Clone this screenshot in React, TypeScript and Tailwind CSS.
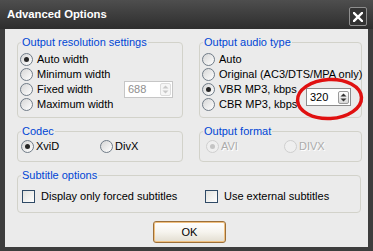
import { ReactNode } from 'react';

function Radio({ label, checked, disabled, gap = 'gap-[4px]' }: { label: string; checked?: boolean; disabled?: boolean; gap?: string }) {
  return (
    <div className={`flex h-[15px] items-center whitespace-nowrap ${gap}`}>
      <span
        className={`flex h-[13px] w-[13px] shrink-0 items-center justify-center rounded-full border ${
          disabled ? 'border-[#cfcfcf] bg-[#efefef]' : 'border-[#707c88] bg-gradient-to-br from-[#d6d6d6] to-white'
        }`}
      >
        {checked && <span className={`h-[5px] w-[5px] rounded-full ${disabled ? 'bg-[#c4c4c4]' : 'bg-[#262626]'}`} />}
      </span>
      <span className={disabled ? 'text-[#ababab] [text-shadow:1px_1px_0_#fff]' : 'text-black'}>{label}</span>
    </div>
  );
}

function Check({ label }: { label: string }) {
  return (
    <div className="flex h-[16px] items-center gap-[6px] whitespace-nowrap">
      <span className="h-[13px] w-[13px] shrink-0 border border-[#2f4a66] bg-gradient-to-br from-[#e2e2de] to-white" />
      <span>{label}</span>
    </div>
  );
}

function Spin({ value, disabled, width }: { value: string; disabled?: boolean; width: string }) {
  const arrow = disabled ? '#c8c8c8' : '#333333';
  return (
    <div
      className={`flex items-center justify-between border bg-white pl-[3px] pr-[1px] ${width} ${
        disabled ? 'h-[17px] border-[#c6c6c6] text-[#8e8e8e]' : 'h-[18px] border-[#8c8c8c] text-black'
      }`}
    >
      <span>{value}</span>
      <span
        className={`flex h-[13px] w-[11px] flex-col items-center justify-center gap-[1px] rounded-[2px] border ${
          disabled ? 'border-[#dcdcdc] bg-[#f6f6f6]' : 'border-[#9a9a9a] bg-gradient-to-b from-white to-[#d8d8d8]'
        }`}
      >
        <svg width="7" height="4" viewBox="0 0 7 4">
          <path d="M0.5 3.5 L3.5 0.5 L6.5 3.5 Z" fill={arrow} />
        </svg>
        <svg width="7" height="4" viewBox="0 0 7 4">
          <path d="M0.5 0.5 L3.5 3.5 L6.5 0.5 Z" fill={arrow} />
        </svg>
      </span>
    </div>
  );
}

function Group({ title, className = '', children }: { title: string; className?: string; children: ReactNode }) {
  return (
    <fieldset className={`min-w-0 rounded-[4px] border border-[#d2d2ca] pl-[1px] ${className}`}>
      <legend className="ml-[2px] px-[1px] leading-[13px] text-[#0046d5]">{title}</legend>
      {children}
    </fieldset>
  );
}

export default function App() {
  return (
    <div className="relative flex h-[251px] w-[373px] flex-col overflow-hidden bg-[#3d3d3d] font-['Liberation_Sans',Arial,sans-serif] text-[11px] text-black">
      <div className="flex h-[29px] shrink-0 items-center justify-between bg-gradient-to-b from-[#4e4e4e] to-[#2e2e2e] pl-[7px] pr-[6px]">
        <span className="text-[11.3px] font-bold text-white">Advanced Options</span>
        <div className="mt-[4px] flex h-[19px] w-[18px] items-center justify-center rounded-[2px] border border-[#8f8f8f] bg-[#333333]">
          <svg width="10" height="10" viewBox="0 0 10 10">
            <path d="M1 1 L9 9 M9 1 L1 9" stroke="#ffffff" strokeWidth="2.4" strokeLinecap="square" />
          </svg>
        </div>
      </div>

      <div className="mx-[5px] mb-[4px] flex flex-1 flex-col bg-[#ebebeb] pb-[4px] pl-[12px] pr-[6px] pt-[7px]">
        <div className="grid grid-cols-[166px_163px] gap-x-[16px]">
          <Group title="Output resolution settings">
            <div className="flex flex-col pb-[5px] pl-[1px] pr-[9px] pt-[3px]">
              <Radio label="Auto width" checked />
              <Radio label="Minimum width" />
              <div className="flex h-[15px] items-center justify-between">
                <Radio label="Fixed width" />
                <Spin value="688" disabled width="w-[49px]" />
              </div>
              <Radio label="Maximum width" />
            </div>
          </Group>

          <Group title="Output audio type">
            <div className="flex flex-col pb-[5px] pl-[1px] pr-[10px] pt-[3px]">
              <Radio label="Auto" />
              <Radio label="Original (AC3/DTS/MPA only)" />
              <div className="flex items-center justify-between">
                <div className="flex flex-col">
                  <Radio label="VBR MP3, kbps" checked />
                  <Radio label="CBR MP3, kbps" />
                </div>
                <Spin value="320" width="w-[45px]" />
              </div>
            </div>
          </Group>

          <Group title="Codec" className="mt-[7px]">
            <div className="flex h-[16px] items-center pl-[2px]">
              <div className="w-[79px]">
                <Radio label="XviD" checked gap="gap-[2px]" />
              </div>
              <Radio label="DivX" gap="gap-[2px]" />
            </div>
            <div className="h-[7px]" />
          </Group>

          <Group title="Output format" className="mt-[7px]">
            <div className="flex h-[16px] items-center pl-[5px]">
              <div className="w-[78px]">
                <Radio label="AVI" checked disabled gap="gap-[2px]" />
              </div>
              <Radio label="DIVX" disabled gap="gap-[2px]" />
            </div>
            <div className="h-[7px]" />
          </Group>
        </div>

        <Group title="Subtitle options" className="mt-[7px] mr-[1px]">
          <div className="flex items-center pb-[8px] pl-[3px] pt-[6px]">
            <div className="w-[183px]">
              <Check label="Display only forced subtitles" />
            </div>
            <Check label="Use external subtitles" />
          </div>
        </Group>

        <div className="mt-[8px] flex justify-center">
          <button className="flex h-[22px] w-[73px] items-center justify-center rounded-[3px] border border-[#9c6f38] bg-gradient-to-b from-white via-[#f6f4ee] to-[#e2ddd0] shadow-[inset_0_0_0_1px_#f0c080]">
            OK
          </button>
        </div>
      </div>

      <svg className="absolute left-[294px] top-[76px]" width="72" height="46" viewBox="0 0 72 46">
        <ellipse cx="35.5" cy="23" rx="32" ry="19.5" fill="none" stroke="#e01010" strokeWidth="3.5" transform="rotate(-3 35.5 23)" />
      </svg>
    </div>
  );
}
